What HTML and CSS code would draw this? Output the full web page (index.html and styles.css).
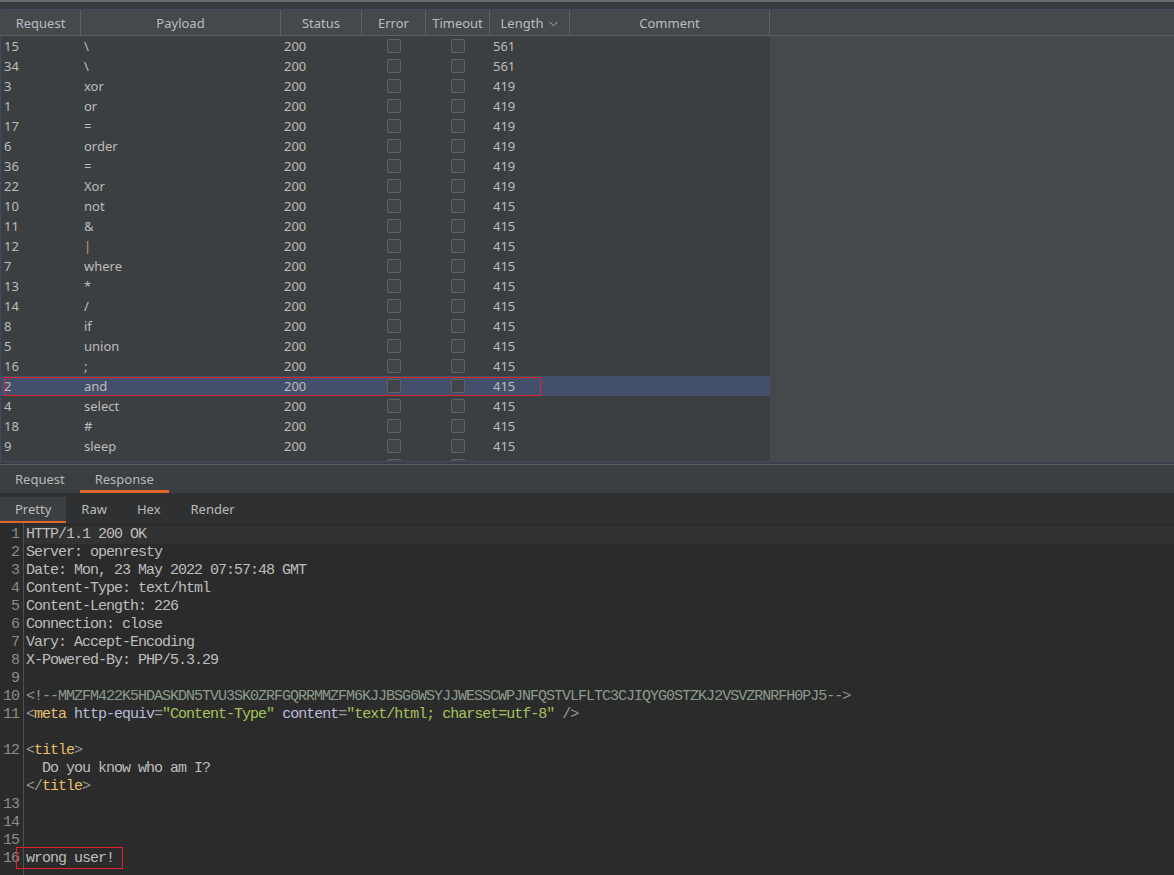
FILE: index.html
```html
<!DOCTYPE html>
<html>
<head>
<meta charset="utf-8">
<link rel="stylesheet" href="styles.css">
</head>
<body>
<div class="topstrip"></div>
<div class="results">
  <div class="thead">
    <div class="th">Request</div>
    <div class="th">Payload</div>
    <div class="th">Status</div>
    <div class="th">Error</div>
    <div class="th">Timeout</div>
    <div class="th">Length <svg class="chev" width="9" height="6" viewBox="0 0 9 6"><polyline points="0.5,0.8 4.5,4.8 8.5,0.8" fill="none" stroke="#a9adb2" stroke-width="1"/></svg></div>
    <div class="th">Comment</div>
    <div class="th last"></div>
  </div>
  <div class="tbody">
    <div class="row"><div class="td">15</div><div class="td">\</div><div class="td">200</div><div class="td cb"><span class="box"></span></div><div class="td cb"><span class="box"></span></div><div class="td">561</div><div class="td"></div><div class="fill"></div></div>
    <div class="row"><div class="td">34</div><div class="td">\</div><div class="td">200</div><div class="td cb"><span class="box"></span></div><div class="td cb"><span class="box"></span></div><div class="td">561</div><div class="td"></div><div class="fill"></div></div>
    <div class="row"><div class="td">3</div><div class="td">xor</div><div class="td">200</div><div class="td cb"><span class="box"></span></div><div class="td cb"><span class="box"></span></div><div class="td">419</div><div class="td"></div><div class="fill"></div></div>
    <div class="row"><div class="td">1</div><div class="td">or</div><div class="td">200</div><div class="td cb"><span class="box"></span></div><div class="td cb"><span class="box"></span></div><div class="td">419</div><div class="td"></div><div class="fill"></div></div>
    <div class="row"><div class="td">17</div><div class="td">=</div><div class="td">200</div><div class="td cb"><span class="box"></span></div><div class="td cb"><span class="box"></span></div><div class="td">419</div><div class="td"></div><div class="fill"></div></div>
    <div class="row"><div class="td">6</div><div class="td">order</div><div class="td">200</div><div class="td cb"><span class="box"></span></div><div class="td cb"><span class="box"></span></div><div class="td">419</div><div class="td"></div><div class="fill"></div></div>
    <div class="row"><div class="td">36</div><div class="td">=</div><div class="td">200</div><div class="td cb"><span class="box"></span></div><div class="td cb"><span class="box"></span></div><div class="td">419</div><div class="td"></div><div class="fill"></div></div>
    <div class="row"><div class="td">22</div><div class="td">Xor</div><div class="td">200</div><div class="td cb"><span class="box"></span></div><div class="td cb"><span class="box"></span></div><div class="td">419</div><div class="td"></div><div class="fill"></div></div>
    <div class="row"><div class="td">10</div><div class="td">not</div><div class="td">200</div><div class="td cb"><span class="box"></span></div><div class="td cb"><span class="box"></span></div><div class="td">415</div><div class="td"></div><div class="fill"></div></div>
    <div class="row"><div class="td">11</div><div class="td">&amp;</div><div class="td">200</div><div class="td cb"><span class="box"></span></div><div class="td cb"><span class="box"></span></div><div class="td">415</div><div class="td"></div><div class="fill"></div></div>
    <div class="row"><div class="td">12</div><div class="td pipe">|</div><div class="td">200</div><div class="td cb"><span class="box"></span></div><div class="td cb"><span class="box"></span></div><div class="td">415</div><div class="td"></div><div class="fill"></div></div>
    <div class="row"><div class="td">7</div><div class="td">where</div><div class="td">200</div><div class="td cb"><span class="box"></span></div><div class="td cb"><span class="box"></span></div><div class="td">415</div><div class="td"></div><div class="fill"></div></div>
    <div class="row"><div class="td">13</div><div class="td">*</div><div class="td">200</div><div class="td cb"><span class="box"></span></div><div class="td cb"><span class="box"></span></div><div class="td">415</div><div class="td"></div><div class="fill"></div></div>
    <div class="row"><div class="td">14</div><div class="td">/</div><div class="td">200</div><div class="td cb"><span class="box"></span></div><div class="td cb"><span class="box"></span></div><div class="td">415</div><div class="td"></div><div class="fill"></div></div>
    <div class="row"><div class="td">8</div><div class="td">if</div><div class="td">200</div><div class="td cb"><span class="box"></span></div><div class="td cb"><span class="box"></span></div><div class="td">415</div><div class="td"></div><div class="fill"></div></div>
    <div class="row"><div class="td">5</div><div class="td">union</div><div class="td">200</div><div class="td cb"><span class="box"></span></div><div class="td cb"><span class="box"></span></div><div class="td">415</div><div class="td"></div><div class="fill"></div></div>
    <div class="row"><div class="td">16</div><div class="td">;</div><div class="td">200</div><div class="td cb"><span class="box"></span></div><div class="td cb"><span class="box"></span></div><div class="td">415</div><div class="td"></div><div class="fill"></div></div>
    <div class="row selected"><div class="td">2</div><div class="td">and</div><div class="td">200</div><div class="td cb"><span class="box"></span></div><div class="td cb"><span class="box"></span></div><div class="td">415</div><div class="td"></div><div class="fill"></div><div class="mark-row"></div></div>
    <div class="row"><div class="td">4</div><div class="td">select</div><div class="td">200</div><div class="td cb"><span class="box"></span></div><div class="td cb"><span class="box"></span></div><div class="td">415</div><div class="td"></div><div class="fill"></div></div>
    <div class="row"><div class="td">18</div><div class="td">#</div><div class="td">200</div><div class="td cb"><span class="box"></span></div><div class="td cb"><span class="box"></span></div><div class="td">415</div><div class="td"></div><div class="fill"></div></div>
    <div class="row"><div class="td">9</div><div class="td">sleep</div><div class="td">200</div><div class="td cb"><span class="box"></span></div><div class="td cb"><span class="box"></span></div><div class="td">415</div><div class="td"></div><div class="fill"></div></div>
    <div class="row"><div class="td"></div><div class="td"></div><div class="td"></div><div class="td cb"><span class="box"></span></div><div class="td cb"><span class="box"></span></div><div class="td"></div><div class="td"></div><div class="fill"></div></div>
  </div>
</div>
<div class="splitter"></div>
<div class="tabs">
  <div class="tab">Request</div>
  <div class="tab active">Response</div>
</div>
<div class="subtabs">
  <div class="subtab active">Pretty</div>
  <div class="subtab">Raw</div>
  <div class="subtab">Hex</div>
  <div class="subtab">Render</div>
</div>
<div class="code">
  <div class="line current"><div class="ln">1</div><div class="src">HTTP/1.1 200 OK</div></div>
  <div class="line"><div class="ln">2</div><div class="src">Server: openresty</div></div>
  <div class="line"><div class="ln">3</div><div class="src">Date: Mon, 23 May 2022 07:57:48 GMT</div></div>
  <div class="line"><div class="ln">4</div><div class="src">Content-Type: text/html</div></div>
  <div class="line"><div class="ln">5</div><div class="src">Content-Length: 226</div></div>
  <div class="line"><div class="ln">6</div><div class="src">Connection: close</div></div>
  <div class="line"><div class="ln">7</div><div class="src">Vary: Accept-Encoding</div></div>
  <div class="line"><div class="ln">8</div><div class="src">X-Powered-By: PHP/5.3.29</div></div>
  <div class="line"><div class="ln">9</div><div class="src"></div></div>
  <div class="line"><div class="ln">10</div><div class="src"><span class="cm">&lt;!--MMZFM422K5HDASKDN5TVU3SK0ZRFGQRRMMZFM6KJJBSG6WSYJJWESSCWPJNFQSTVLFLTC3CJIQYG0STZKJ2VSVZRNRFH0PJ5--&gt;</span></div></div>
  <div class="line"><div class="ln">11</div><div class="src"><span class="pn">&lt;</span><span class="tg">meta</span> <span class="at">http-equiv</span><span class="pn">=</span><span class="vl">"Content-Type"</span> <span class="at">content</span><span class="pn">=</span><span class="vl">"text/html; charset=utf-8"</span> <span class="pn">/&gt;</span>
 </div></div>
  <div class="line"><div class="ln">12</div><div class="src"><span class="pn">&lt;</span><span class="tg">title</span><span class="pn">&gt;</span>
  Do you know who am I?
<span class="pn">&lt;/</span><span class="tg">title</span><span class="pn">&gt;</span></div></div>
  <div class="line"><div class="ln">13</div><div class="src"></div></div>
  <div class="line"><div class="ln">14</div><div class="src"></div></div>
  <div class="line"><div class="ln">15</div><div class="src"></div></div>
  <div class="line marked"><div class="ln">16</div><div class="src">wrong user!</div><div class="mark-line"></div></div>
</div>
</body>
</html>
```
FILE: styles.css
```css
html, body {
  margin: 0;
  padding: 0;
}
body {
  width: 1174px;
  height: 875px;
  overflow: hidden;
  background: #3c3f41;
  font-family: "Noto Sans", "Open Sans", sans-serif;
  font-size: 13px;
  color: #bcbcbc;
}

.topstrip {
  height: 7px;
  border-top: 2px solid #6b6b6b;
  background: #393c3f;
}

.results {
  height: 451px;
  border: 1px solid #3f4b64;
  border-right: none;
  background: #46494c;
  overflow: hidden;
  display: flex;
  flex-direction: column;
}

.thead,
.row {
  display: grid;
  grid-template-columns: 80px 200px 81px 64px 64px 80px 200px 1fr;
}

.thead {
  height: 25px;
  border-bottom: 1px solid #5b5f63;
  background: #45494c;
  color: #b7bdc4;
}
.th {
  box-sizing: border-box;
  border-right: 1px solid #5b5f63;
  display: flex;
  align-items: center;
  justify-content: center;
  gap: 6px;
  padding-top: 2px;
  line-height: 23px;
}
.th.last {
  border-right: none;
}
.chev {
  display: block;
  margin-top: 1px;
}

.tbody {
  flex: 1;
  overflow: hidden;
}
.row {
  grid-template-rows: 20px;
  height: 20px;
  line-height: 20px;
}
.row > * { grid-row: 1; }
.row > :nth-child(1) { grid-column: 1; }
.row > :nth-child(2) { grid-column: 2; }
.row > :nth-child(3) { grid-column: 3; }
.row > :nth-child(4) { grid-column: 4; }
.row > :nth-child(5) { grid-column: 5; }
.row > :nth-child(6) { grid-column: 6; }
.row > :nth-child(7) { grid-column: 7; }
.row > :nth-child(8) { grid-column: 8; }

.td {
  background: #3c3f41;
  padding-left: 3px;
  white-space: pre;
  overflow: hidden;
}
.td.cb {
  padding-left: 0;
  display: flex;
  align-items: center;
  justify-content: center;
}
.box {
  width: 12px;
  height: 12px;
  border: 1px solid #5f6366;
  border-radius: 2px;
  background: #414547;
}
.td.pipe {
  color: #c9a250;
}
.row.selected .td {
  background: #44506b;
}
.row > .mark-row {
  grid-column: 1 / -1;
  position: relative;
  z-index: 5;
  align-self: start;
  justify-self: start;
  width: 537px;
  height: 19px;
  margin: 1px 0 0 3px;
  box-sizing: border-box;
  border: 1px solid #e0232b;
  pointer-events: none;
}

.splitter {
  height: 2px;
  border-bottom: 1px solid #5c5c5c;
  background: #3c3f41;
}

.tabs {
  display: flex;
  height: 28px;
  background: #3c3f41;
}
.tab {
  box-sizing: border-box;
  height: 28px;
  padding: 3px 15px 0;
  line-height: 22px;
  border-bottom: 3px solid transparent;
  color: #b8b8b8;
}
.tab.active {
  border-bottom-color: #e0682d;
}

.subtabs {
  display: flex;
  height: 26px;
  padding-top: 4px;
  background: #2e3032;
}
.subtab {
  box-sizing: border-box;
  height: 26px;
  padding: 0 15px;
  line-height: 24px;
  border-bottom: 2px solid transparent;
  color: #bbbbbb;
}
.subtab.active {
  background: #3c3f41;
  border-bottom-color: #e0682d;
}

.code {
  height: 350px;
  padding-top: 3px;
  background: #2b2b2b linear-gradient(to right, transparent 23px, #505050 23px, #505050 24px, transparent 24px);
  font-family: "Liberation Mono", "DejaVu Sans Mono", monospace;
  font-size: 15px;
  letter-spacing: -1px;
  line-height: 18px;
  color: #bdbdbd;
  overflow: hidden;
}
.line {
  display: flex;
  position: relative;
}
.ln {
  flex: 0 0 24px;
  box-sizing: border-box;
  padding-right: 5px;
  text-align: right;
  color: #8a8a8a;
}
.src {
  flex: 1;
  min-height: 18px;
  padding-left: 2px;
  white-space: pre;
}
.line.current .src {
  background: #323232;
}
.cm { color: #8b9b8b; }
.pn { color: #9a9a9a; }
.tg { color: #e8bf6a; }
.at { color: #b8bdd8; }
.vl { color: #a5c25c; }

.mark-line {
  position: absolute;
  z-index: 2;
  left: 16px;
  top: -3px;
  width: 107px;
  height: 22px;
  box-sizing: border-box;
  border: 1px solid #e0232b;
  pointer-events: none;
}
```
